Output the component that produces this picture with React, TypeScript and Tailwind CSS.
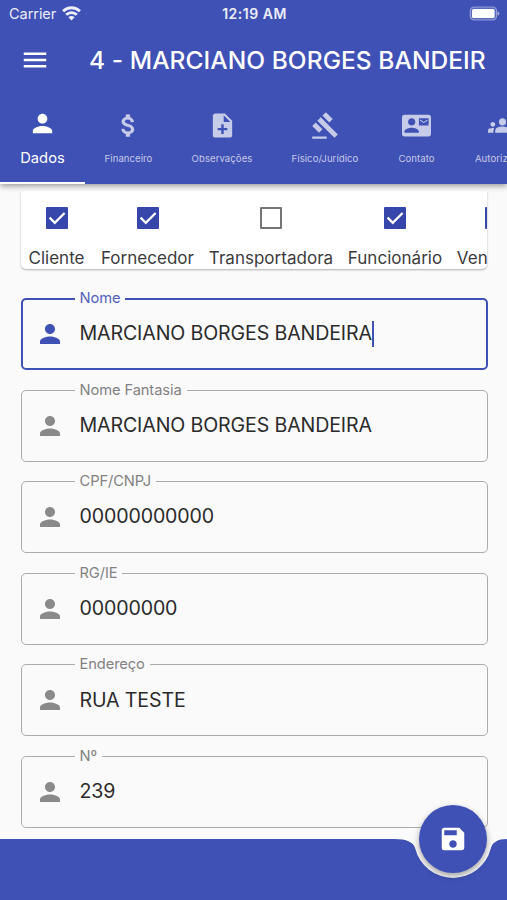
import { useState } from "react";
import type { ComponentType } from "react";
import {
  MdContactMail,
  MdGavel,
  MdGroups,
  MdMenu,
  MdNoteAdd,
  MdPerson,
  MdSave,
} from "react-icons/md";

type Tab = { label: string; icon: ComponentType<{ className?: string }>; width: string };

// a bit heavier than the stock dollar icon
function DollarIcon({ className }: { className?: string }) {
  return (
    <svg viewBox="0 0 24 24" fill="currentColor" stroke="currentColor" strokeWidth="0.4" className={className}>
      <path d="M11.8 10.9c-2.27-.59-3-1.2-3-2.15 0-1.09 1.01-1.85 2.7-1.85 1.78 0 2.44.85 2.5 2.1h2.21c-.07-1.72-1.12-3.3-3.21-3.81V3h-3v2.16c-1.94.42-3.5 1.68-3.5 3.61 0 2.31 1.91 3.46 4.7 4.13 2.5.6 3 1.48 3 2.41 0 .69-.49 1.79-2.7 1.79-2.06 0-2.87-.92-2.98-2.1h-2.2c.12 2.19 1.76 3.42 3.68 3.83V21h3v-2.15c1.95-.37 3.5-1.5 3.5-3.55 0-2.84-2.43-3.81-4.7-4.4z" />
    </svg>
  );
}

const tabs: Tab[] = [
  { label: "Dados", icon: MdPerson, width: "w-[85px]" },
  { label: "Financeiro", icon: DollarIcon, width: "w-[87px]" },
  { label: "Observações", icon: MdNoteAdd, width: "w-[100px]" },
  { label: "Físico/Jurídico", icon: MdGavel, width: "w-[106px]" },
  { label: "Contato", icon: MdContactMail, width: "w-[77px]" },
  { label: "Autorizados", icon: MdGroups, width: "w-[95px]" },
];

const roles = [
  { label: "Cliente", checked: true, width: "w-[72px]" },
  { label: "Fornecedor", checked: true, width: "w-[110px]" },
  { label: "Transportadora", checked: false, width: "w-[137px]" },
  { label: "Funcionário", checked: true, width: "w-[111px]" },
  { label: "Vendedor", checked: true, width: "w-[91px]" },
];

const fields = [
  { label: "Nome", value: "MARCIANO BORGES BANDEIRA" },
  { label: "Nome Fantasia", value: "MARCIANO BORGES BANDEIRA" },
  { label: "CPF/CNPJ", value: "00000000000" },
  { label: "RG/IE", value: "00000000" },
  { label: "Endereço", value: "RUA TESTE" },
  { label: "Nº", value: "239" },
];

function StatusBar() {
  return (
    <div className="grid h-[27px] grid-cols-3 items-center pr-[7px] pl-[9px] text-[14.5px] text-white/90">
      <div className="flex items-center gap-[6px]">
        <span className="tracking-[-0.05px]">Carrier</span>
        <svg width="19" height="15" viewBox="0 0 19 15" fill="none" stroke="currentColor" strokeWidth="2.9" className="-mt-[1px]">
          <path d="M1.1 5.2a12 12 0 0 1 16.8 0" />
          <path d="M4.2 8.8a7.6 7.6 0 0 1 10.6 0" />
          <path d="M9.5 14.5 6.4 11.2a4.4 4.4 0 0 1 6.2 0z" fill="currentColor" stroke="none" />
        </svg>
      </div>
      <div className="text-center text-[14px] font-semibold tracking-[0.5px] whitespace-nowrap">12:19 AM</div>
      <div className="-mt-[1px] flex justify-end">
        <svg width="31" height="15" viewBox="0 0 31 15">
          <rect x="1.2" y="1" width="26.4" height="13" rx="4" fill="#fff" fillOpacity="0.15" stroke="#fff" strokeOpacity="0.4" strokeWidth="1.2" />
          <rect x="3" y="3" width="22.6" height="9" rx="1.6" fill="#fff" />
          <path d="M28.6 5.2c1.2.5 1.8 1.3 1.8 2.3s-.6 1.8-1.8 2.3z" fill="#fff" fillOpacity="0.5" />
        </svg>
      </div>
    </div>
  );
}

function Checkbox({ checked }: { checked: boolean }) {
  if (!checked) {
    return <div className="size-[22px] shrink-0 rounded-[1px] border-[2.4px] border-[#757575]" />;
  }
  return (
    <div className="size-[22px] shrink-0 rounded-[1px] bg-[#3646ab]">
      <svg width="22" height="22" viewBox="0 0 22 22" fill="none" stroke="#fff" strokeWidth="2.3">
        <path d="M3.6 10.6 8.8 15.8 18.6 6" />
      </svg>
    </div>
  );
}

function Field({ label, value, active, onFocus }: { label: string; value: string; active: boolean; onFocus: () => void }) {
  return (
    <div
      onClick={onFocus}
      className={
        active
          ? "relative flex h-[72px] items-center rounded-[5px] border-[2.4px] border-[#3f51b5] pl-[12px]"
          : "relative flex h-[72px] items-center rounded-[5px] border-[1.4px] border-[#acacac] pl-[13px]"
      }
    >
      <span
        className={
          active
            ? "absolute top-[-12px] left-[52px] bg-[#fafafa] px-[5px] text-[14.7px] leading-[20px] tracking-[-0.1px] text-[#5362bd]"
            : "absolute top-[-11px] left-[53px] bg-[#fafafa] px-[5px] text-[14.7px] leading-[20px] tracking-[-0.1px] text-[#828282]"
        }
      >
        {label}
      </span>
      <MdPerson className={active ? "size-[30px] text-[#3f51b5]" : "size-[30px] text-[#8a8a8a]"} />
      <span className="ml-[15px] text-[19.6px] tracking-[-0.13px] whitespace-nowrap text-[#2b2b2b]">{value}</span>
      {active && <span className="h-[26px] w-[2px] bg-[#3f51b5]" />}
    </div>
  );
}

function tabClass(active: boolean) {
  return active
    ? "flex shrink-0 flex-col items-center border-b-[2.4px] border-white pt-[17px] text-white"
    : "flex shrink-0 flex-col items-center pt-[19px] text-white/70";
}

export default function App() {
  const [tab, setTab] = useState(0);
  const [focused, setFocused] = useState(0);

  return (
    <main className="relative flex h-[900px] w-[507px] flex-col overflow-hidden bg-[#fafafa] font-['Inter',sans-serif]">
      <header className="relative z-10 h-[184px] shrink-0 bg-[#3f51b5] shadow-[0_2px_6px_rgba(0,0,0,0.4)]">
        <StatusBar />
        <div className="flex h-[65px] items-center text-white">
          <MdMenu className="ml-[20px] size-[30px] shrink-0" />
          <h1 className="mt-px ml-[39px] w-[400px] overflow-hidden text-[24.5px] font-medium tracking-[0.06px] whitespace-nowrap">
            4 - MARCIANO BORGES BANDEIR
          </h1>
        </div>
        <nav className="flex h-[92px] overflow-hidden">
          {tabs.map(({ label, icon: Icon, width }, i) => (
            <button
              key={label}
              onClick={() => setTab(i)}
              className={tabClass(i === tab) + " " + width}
            >
              <Icon className="size-[29px]" />
              <span
                className={
                  i === tab
                    ? "mt-[10px] h-[20px] text-[14.7px] leading-[20px] tracking-[0.05px]"
                    : "mt-[9px] h-[20px] text-[9.6px] leading-[20px] tracking-[0.05px]"
                }
              >
                {label}
              </span>
            </button>
          ))}
        </nav>
      </header>

      <section className="mx-[20.5px] mt-[7px] flex h-[78px] shrink-0 overflow-hidden rounded-b-[5px] bg-white shadow-[0_1px_2px_rgba(0,0,0,0.3)]">
        {roles.map((role) => (
          <div key={role.label} className={"flex shrink-0 flex-col items-center pt-[16px] " + role.width}>
            <Checkbox checked={role.checked} />
            <span className="mt-[17px] text-[17px] leading-[24px] tracking-[0.02px] text-[#3c3c3c]">{role.label}</span>
          </div>
        ))}
      </section>

      <section className="mr-[19.5px] ml-[20.5px] mt-[29px] flex flex-col gap-[19.6px]">
        {fields.map((field, i) => (
          <Field key={field.label} {...field} active={i === focused} onFocus={() => setFocused(i)} />
        ))}
      </section>

      {/* bottom bar, notched around the save button */}
      <footer className="absolute inset-x-0 bottom-0 h-[61px]">
        <svg width="507" height="61" viewBox="0 0 507 61" className="absolute inset-0">
          <path
            d="M0 0H394.4Q412.8 0 415.2 9.5A39 39 0 0 0 490.8 9.5Q493.2 0 507 0V61H0z"
            fill="#3f51b5"
          />
        </svg>
        <button className="absolute -top-[34px] left-[419px] flex size-[68px] items-center justify-center rounded-full bg-[#3f51b5] text-white shadow-[0_3px_6px_rgba(0,0,0,0.35)]">
          <MdSave className="size-[30px]" />
        </button>
      </footer>
    </main>
  );
}
